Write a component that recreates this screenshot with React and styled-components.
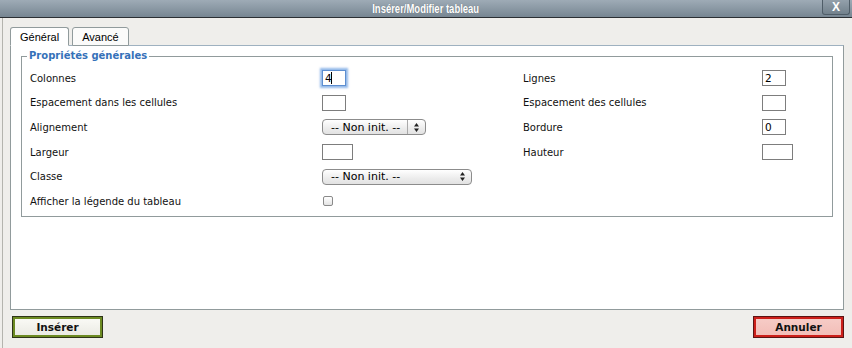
import React from "react";
import { styled, createGlobalStyle } from "styled-components";

/***********************Styles*************************/
const labelFont = `"DejaVu Sans", Verdana, sans-serif`;
const panelBorder = "#919b9c";

const GlobalStyle = createGlobalStyle`
  html, body {
    margin: 0;
    padding: 0;
    background: #efeeeb;
  }
`;

const Window = styled.div`
  width: 852px;
  height: 348px;
  display: flex;
  flex-direction: column;
  background: #efeeeb;
  overflow: hidden;
`;

const TitleBar = styled.div`
  position: relative;
  height: 17px;
  border-bottom: 1px solid #2b2f33;
  background: linear-gradient(#9eabb6, #778692);
  display: flex;
  align-items: center;
  justify-content: center;
`;

const Title = styled.span`
  display: inline-block;
  font: bold 12px "Liberation Sans", Arial, sans-serif;
  color: #fff;
  transform: scaleX(0.79);
  text-shadow: 0 0 1px rgba(0, 0, 0, 0.35);
`;

const CloseButton = styled.div`
  position: absolute;
  top: 0;
  right: 2px;
  width: 26px;
  height: 14px;
  border: 1px solid #4f5d68;
  border-top: none;
  border-radius: 0 0 3px 3px;
  background: linear-gradient(#93a0ab, #72818c);
  color: #fff;
  font: bold 12px "Liberation Sans", sans-serif;
  display: flex;
  align-items: center;
  justify-content: center;
`;

const Body = styled.div`
  flex: 1;
  margin-left: 2px;
  border-left: 1px solid #b4b4ae;
  padding: 9px 8px 0 7px;
  display: flex;
  flex-direction: column;
`;

const Tabs = styled.div`
  display: flex;
  gap: 3px;
  position: relative;
  z-index: 1;
  margin-bottom: -1px;
`;

const Tab = styled.div`
  height: 17px;
  padding: 0 9px;
  border: 1px solid ${panelBorder};
  border-bottom: ${(p) => (p.$active ? "1px solid #fff" : `1px solid ${panelBorder}`)};
  border-radius: 3px 3px 0 0;
  background: ${(p) => (p.$active ? "#fff" : "#fbfbfa")};
  font: 11px "Liberation Sans", Tahoma, sans-serif;
  color: #000;
  display: flex;
  align-items: center;
`;

const Panel = styled.div`
  height: 260px;
  background: #fff;
  border: 1px solid ${panelBorder};
  border-top-color: #9eb1c0;
  padding: 3px 10px 0;
`;

const Fieldset = styled.fieldset`
  margin: 0;
  padding: 3px 8px 2px;
  border: 1px solid ${panelBorder};
`;

const Legend = styled.legend`
  margin-left: -3px;
  padding: 0 2px;
  font: bold 10px ${labelFont};
  line-height: 14px;
  color: #3571b9;
`;

const Grid = styled.div`
  display: grid;
  grid-template-columns: 292px 201px 239px 1fr;
  grid-auto-rows: 24.6px;
  align-items: center;
`;

const Label = styled.label`
  font: 10px ${labelFont};
  color: #111;
`;

const Field = styled.div`
  position: relative;
  display: flex;
  align-items: center;
`;

const TextInput = styled.input`
  box-sizing: border-box;
  width: ${(p) => p.$w || 24}px;
  height: 16px;
  margin: 0;
  padding: 0 2px;
  border: 1px solid ${(p) => (p.$focus ? "#5d8ed0" : "#7d7d7d")};
  box-shadow: ${(p) => (p.$focus ? "0 0 2px 2px rgba(110, 160, 225, 0.75)" : "none")};
  background: #fff;
  font: 10.5px ${labelFont};
  color: #000;
  outline: none;
`;

const Caret = styled.span`
  position: absolute;
  left: 9px;
  top: 2px;
  width: 1px;
  height: 12px;
  background: #000;
`;

const Select = styled.div`
  box-sizing: border-box;
  width: ${(p) => p.$w}px;
  height: 16px;
  border: 1px solid #8c8c8c;
  border-radius: 4px;
  background: linear-gradient(#ffffff, #ececec 60%, #e2e2e2);
  display: flex;
  align-items: center;
  font: 11px ${labelFont};
  color: #000;
`;

const SelectText = styled.span`
  flex: 1;
  padding-left: 8px;
  white-space: nowrap;
`;

const SelectArrow = styled.span`
  width: 17px;
  height: 100%;
  border-left: 1px solid ${(p) => (p.$sep ? "#a9a9a9" : "transparent")};
  display: flex;
  align-items: center;
  justify-content: center;
`;

const Check = styled.span`
  box-sizing: border-box;
  width: 10px;
  height: 10px;
  margin-left: 1px;
  border: 1px solid #8a8a8a;
  border-radius: 2px;
  background: linear-gradient(#fff, #e4e4e4);
`;

const Footer = styled.div`
  display: flex;
  justify-content: space-between;
  padding: 6px 0 0 2px;
`;

const Button = styled.button`
  box-sizing: border-box;
  width: 91px;
  height: 22px;
  margin: 0;
  padding: 0;
  border: 1px solid ${(p) => (p.$tone === "red" ? "#5c1414" : "#2e3418")};
  box-shadow: inset 0 0 0 2px ${(p) => (p.$tone === "red" ? "#cc1f1a" : "#6c8a22")};
  background: ${(p) =>
    p.$tone === "red"
      ? "linear-gradient(#f7cdc8, #f2bcb6)"
      : "linear-gradient(#fbfbf7, #e9e9e2)"};
  font: bold 10.5px ${labelFont};
  color: #111;
  cursor: pointer;
`;

/***********************Component*************************/

const Arrows = () => (
  <svg width="5" height="9" viewBox="0 0 5 9">
    <path d="M2.5 0 L5 3.5 H0 Z M2.5 9 L5 5.5 H0 Z" fill="#222" />
  </svg>
);

const App = () => {
  return (
    <Window>
      <GlobalStyle />
      <TitleBar>
        <Title>Insérer/Modifier tableau</Title>
        <CloseButton>X</CloseButton>
      </TitleBar>
      <Body>
        <Tabs>
          <Tab $active>Général</Tab>
          <Tab>Avancé</Tab>
        </Tabs>
        <Panel>
          <Fieldset>
            <Legend>Propriétés générales</Legend>
            <Grid>
              <Label>Colonnes</Label>
              <Field>
                <TextInput $focus readOnly value="4" />
                <Caret />
              </Field>
              <Label>Lignes</Label>
              <Field>
                <TextInput readOnly value="2" />
              </Field>

              <Label>Espacement dans les cellules</Label>
              <Field>
                <TextInput readOnly value="" />
              </Field>
              <Label>Espacement des cellules</Label>
              <Field>
                <TextInput readOnly value="" />
              </Field>

              <Label>Alignement</Label>
              <Field>
                <Select $w={104}>
                  <SelectText>-- Non init. --</SelectText>
                  <SelectArrow $sep>
                    <Arrows />
                  </SelectArrow>
                </Select>
              </Field>
              <Label>Bordure</Label>
              <Field>
                <TextInput readOnly value="0" />
              </Field>

              <Label>Largeur</Label>
              <Field>
                <TextInput $w={31} readOnly value="" />
              </Field>
              <Label>Hauteur</Label>
              <Field>
                <TextInput $w={31} readOnly value="" />
              </Field>

              <Label>Classe</Label>
              <Field>
                <Select $w={150}>
                  <SelectText>-- Non init. --</SelectText>
                  <SelectArrow>
                    <Arrows />
                  </SelectArrow>
                </Select>
              </Field>
              <span />
              <span />

              <Label>Afficher la légende du tableau</Label>
              <Field>
                <Check />
              </Field>
            </Grid>
          </Fieldset>
        </Panel>
        <Footer>
          <Button>Insérer</Button>
          <Button $tone="red">Annuler</Button>
        </Footer>
      </Body>
    </Window>
  );
};

export default App;
